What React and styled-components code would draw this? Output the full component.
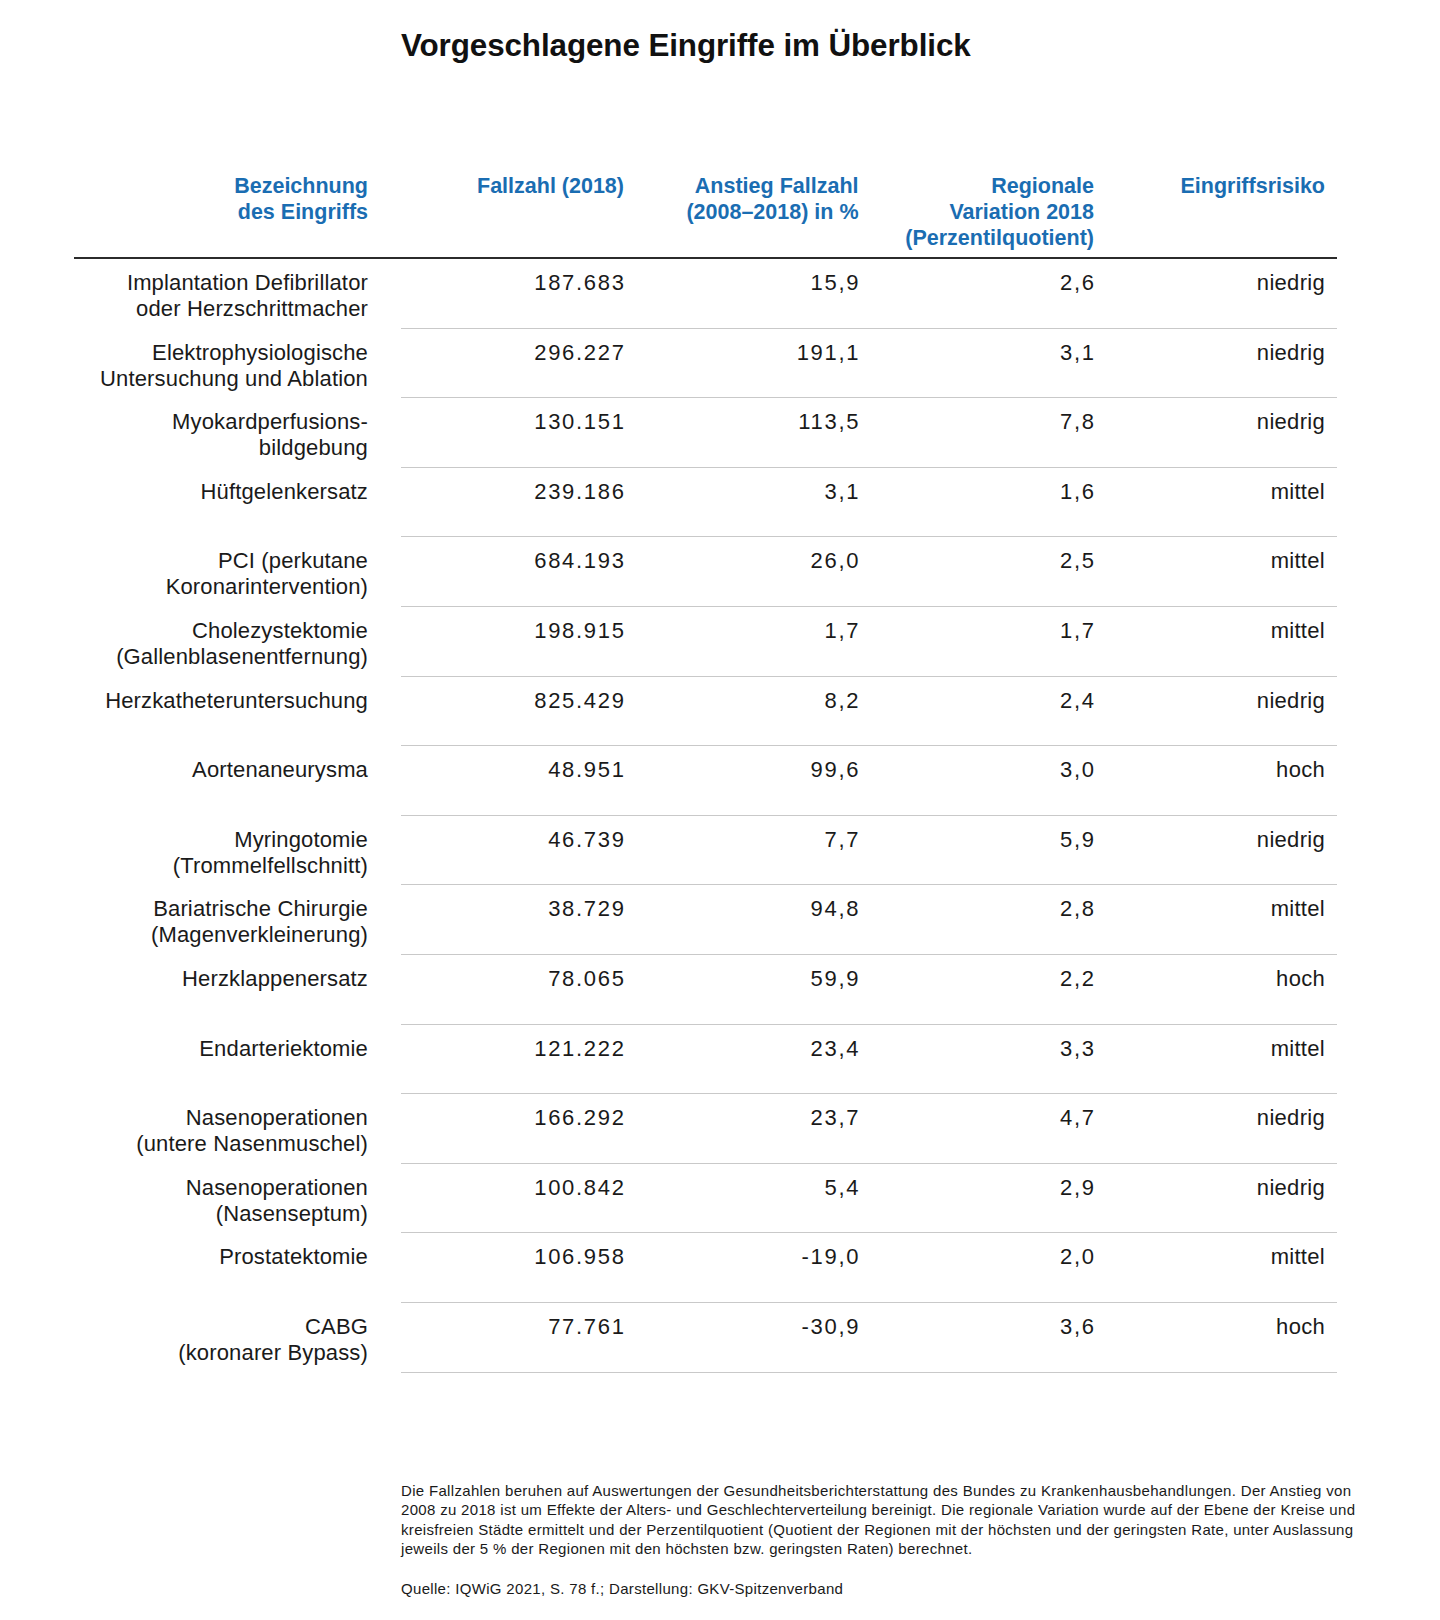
import styled, { createGlobalStyle } from 'styled-components';

const GlobalStyle = createGlobalStyle`
  html, body {
    margin: 0;
    padding: 0;
    background: #ffffff;
  }
  body {
    font-family: "Liberation Sans", Arial, sans-serif;
    color: #1a1a1a;
  }
`;

const blau = '#1a6db2';

const rows = [
  ['Implantation Defibrillator', 'oder Herzschrittmacher', '187.683', '15,9', '2,6', 'niedrig'],
  ['Elektrophysiologische', 'Untersuchung und Ablation', '296.227', '191,1', '3,1', 'niedrig'],
  ['Myokardperfusions-', 'bildgebung', '130.151', '113,5', '7,8', 'niedrig'],
  ['Hüftgelenkersatz', null, '239.186', '3,1', '1,6', 'mittel'],
  ['PCI (perkutane', 'Koronarintervention)', '684.193', '26,0', '2,5', 'mittel'],
  ['Cholezystektomie', '(Gallenblasenentfernung)', '198.915', '1,7', '1,7', 'mittel'],
  ['Herzkatheteruntersuchung', null, '825.429', '8,2', '2,4', 'niedrig'],
  ['Aortenaneurysma', null, '48.951', '99,6', '3,0', 'hoch'],
  ['Myringotomie', '(Trommelfellschnitt)', '46.739', '7,7', '5,9', 'niedrig'],
  ['Bariatrische Chirurgie', '(Magenverkleinerung)', '38.729', '94,8', '2,8', 'mittel'],
  ['Herzklappenersatz', null, '78.065', '59,9', '2,2', 'hoch'],
  ['Endarteriektomie', null, '121.222', '23,4', '3,3', 'mittel'],
  ['Nasenoperationen', '(untere Nasenmuschel)', '166.292', '23,7', '4,7', 'niedrig'],
  ['Nasenoperationen', '(Nasenseptum)', '100.842', '5,4', '2,9', 'niedrig'],
  ['Prostatektomie', null, '106.958', '-19,0', '2,0', 'mittel'],
  ['CABG', '(koronarer Bypass)', '77.761', '-30,9', '3,6', 'hoch'],
];

const Page = styled.div`
  width: 1263px;
  padding: 27px 0 0 74px;
  box-sizing: content-box;
`;

const Title = styled.h1`
  margin: 0 0 0 327px;
  font-size: 31.4px;
  line-height: 38px;
  font-weight: 700;
  color: #111;
  letter-spacing: -0.1px;
`;

const Table = styled.div`
  margin-top: 108px;
`;

const Row = styled.div`
  display: flex;
  border-bottom: ${(p) => (p.$head ? '2px solid #2b2b2b' : 'none')};
`;

const Label = styled.div`
  width: 327px;
  flex: 0 0 auto;
  box-sizing: border-box;
  padding: ${(p) => (p.$head ? '0 33px 6px 0' : '11px 33px 0 0')};
  text-align: right;
  font-size: ${(p) => (p.$head ? '21.5px' : '22px')};
  font-weight: ${(p) => (p.$head ? 700 : 400)};
  color: ${(p) => (p.$head ? blau : '#1a1a1a')};
  line-height: 26px;
  letter-spacing: ${(p) => (p.$head ? '0' : '0.15px')};
`;

const Values = styled.div`
  flex: 1;
  display: grid;
  grid-template-columns: 235px 234.5px 235.5px 1fr;
  height: ${(p) => (p.$head ? 'auto' : '69.6px')};
  box-sizing: border-box;
  border-bottom: ${(p) => (p.$head ? 'none' : '1.5px solid #c9c9c9')};
`;

const Cell = styled.div`
  padding: ${(p) => (p.$head ? '0 12px 6px 0' : '11px 12px 0 0')};
  text-align: right;
  font-size: ${(p) => (p.$head ? '21.5px' : '22px')};
  font-weight: ${(p) => (p.$head ? 700 : 400)};
  color: ${(p) => (p.$head ? blau : '#1a1a1a')};
  line-height: 26px;
  letter-spacing: ${(p) => (p.$num ? '1.7px' : p.$head ? '0' : '0.3px')};
  margin-right: ${(p) => (p.$num ? '-1.7px' : '0')};
`;

const Note = styled.div`
  margin: 108px 0 0 327px;
  font-size: 15px;
  line-height: 19.6px;
  letter-spacing: 0.32px;
  color: #1a1a1a;
  white-space: nowrap;

  p {
    margin: 0 0 20px 0;
  }
`;

export default function App() {
  return (
    <>
      <GlobalStyle />
      <Page>
        <Title>Vorgeschlagene Eingriffe im Überblick</Title>
        <Table>
          <Row $head>
            <Label $head>
              Bezeichnung
              <br />
              des Eingriffs
            </Label>
            <Values $head>
              <Cell $head>Fallzahl (2018)</Cell>
              <Cell $head>
                Anstieg Fallzahl
                <br />
                (2008–2018) in %
              </Cell>
              <Cell $head>
                Regionale
                <br />
                Variation 2018
                <br />
                (Perzentilquotient)
              </Cell>
              <Cell $head>Eingriffsrisiko</Cell>
            </Values>
          </Row>
          {rows.map((r, i) => (
            <Row key={i}>
              <Label>
                {r[0]}
                {r[1] && (
                  <>
                    <br />
                    {r[1]}
                  </>
                )}
              </Label>
              <Values>
                <Cell $num>{r[2]}</Cell>
                <Cell $num>{r[3]}</Cell>
                <Cell $num>{r[4]}</Cell>
                <Cell>{r[5]}</Cell>
              </Values>
            </Row>
          ))}
        </Table>
        <Note>
          <p>
            Die Fallzahlen beruhen auf Auswertungen der Gesundheitsberichterstattung des Bundes zu Krankenhausbehandlungen. Der Anstieg von
            <br />
            2008 zu 2018 ist um Effekte der Alters- und Geschlechterverteilung bereinigt. Die regionale Variation wurde auf der Ebene der Kreise und
            <br />
            kreisfreien Städte ermittelt und der Perzentilquotient (Quotient der Regionen mit der höchsten und der geringsten Rate, unter Auslassung
            <br />
            jeweils der 5 % der Regionen mit den höchsten bzw. geringsten Raten) berechnet.
          </p>
          <p>Quelle: IQWiG 2021, S. 78 f.; Darstellung: GKV-Spitzenverband</p>
        </Note>
      </Page>
    </>
  );
}
